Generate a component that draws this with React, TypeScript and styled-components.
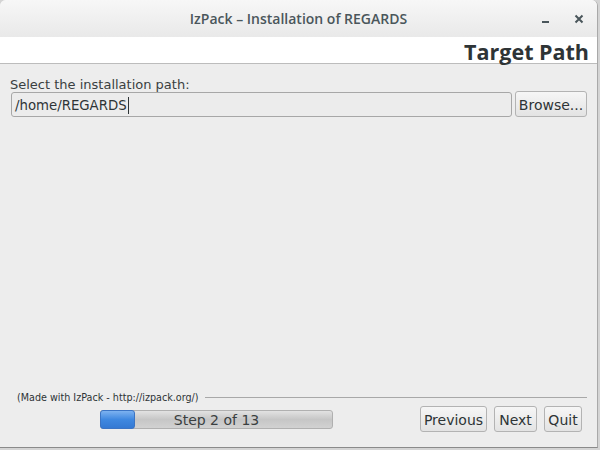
import React from "react";
import styled, { createGlobalStyle } from "styled-components";

const Global = createGlobalStyle`
  html, body { margin: 0; padding: 0; background: #d9d9d9; }
  body { width: 600px; height: 450px; overflow: hidden; }
`;

const Screen = styled.div`
  width: 600px;
  height: 450px;
  background: #d4d4d4;
  display: flex;
  align-items: flex-start;
`;

const Window = styled.div`
  width: 597px;
  height: 447px;
  display: flex;
  flex-direction: column;
  background: #ededed;
  border-right: 1px solid #a9a9a9;
  border-bottom: 1px solid #8a8a8a;
  border-radius: 6px 6px 0 0;
  overflow: hidden;
  font-family: "DejaVu Sans", sans-serif;
  color: #2e3436;
`;

const TitleBar = styled.div`
  height: 37px;
  flex: none;
  display: grid;
  grid-template-columns: 1fr auto 1fr;
  align-items: center;
  background: linear-gradient(#f7f7f7, #e9e9e9);
`;

const Title = styled.div`
  grid-column: 2;
  font-family: "Open Sans", sans-serif;
  font-weight: 600;
  font-size: 14px;
  color: #4a565b;
  padding-bottom: 1px;
`;

const Controls = styled.div`
  grid-column: 3;
  justify-self: end;
  display: flex;
  align-items: center;
  gap: 23px;
  padding-right: 13px;
`;

const CtlIcon = styled.svg`
  display: block;
  width: 10px;
  height: 10px;
`;

const Header = styled.div`
  height: 26px;
  flex: none;
  background: #ffffff;
  border-bottom: 1px solid #bcbcbc;
  display: flex;
  justify-content: flex-end;
  align-items: flex-end;
  padding-right: 8px;
`;

const HeaderTitle = styled.div`
  font-family: "Open Sans", sans-serif;
  font-weight: 700;
  font-size: 21.5px;
  line-height: 22px;
  color: #2e3436;
`;

const Content = styled.div`
  padding: 13px 10px 0 10px;
  display: flex;
  flex-direction: column;
`;

const Label = styled.div`
  font-size: 13px;
  line-height: 15px;
  color: #3a3f41;
`;

const FieldRow = styled.div`
  display: flex;
  gap: 3px;
  margin-top: -1px;
  align-items: flex-end;
`;

const PathField = styled.div`
  flex: 1;
  height: 25px;
  box-sizing: border-box;
  border: 1px solid #a7a7a7;
  border-radius: 3px;
  background: #ececec;
  display: flex;
  align-items: center;
  padding: 1px 0 0 3px;
  font-size: 13.3px;
  color: #2e3436;
  margin-left: 1px;
`;

const Caret = styled.span`
  display: inline-block;
  width: 1px;
  height: 17px;
  background: #2e3436;
  margin-left: 1px;
`;

const Button = styled.div<{ $w: number }>`
  width: ${(p) => p.$w}px;
  height: 26px;
  box-sizing: border-box;
  border: 1px solid #b3b3b3;
  border-radius: 3px;
  background: linear-gradient(#f6f6f6, #e3e3e3);
  display: flex;
  align-items: center;
  justify-content: center;
  padding-top: 2px;
  font-size: 14px;
  color: #2e3436;
  flex: none;
`;

const Spacer = styled.div`
  flex: 1;
`;

const Footer = styled.div`
  padding: 0 10px 15px 17px;
  display: flex;
  flex-direction: column;
`;

const Credit = styled.div`
  display: flex;
  align-items: center;
  gap: 6px;
  font-size: 9.6px;
  color: #2e3436;
  height: 12px;
`;

const Rule = styled.div`
  flex: 1;
  height: 1px;
  background: #a8a8a8;
`;

const BottomRow = styled.div`
  display: flex;
  align-items: center;
  margin-top: 3px;
  padding-left: 83px;
`;

const Progress = styled.div`
  width: 233px;
  height: 19px;
  box-sizing: border-box;
  border: 1px solid #b0b0b0;
  border-radius: 3px;
  background: linear-gradient(#e2e2e2, #c6c6c6 50%, #d2d2d2);
  position: relative;
  display: flex;
  align-items: center;
  justify-content: center;
  padding-top: 2px;
  font-size: 14px;
  color: #3a3f41;
`;

const Fill = styled.div`
  position: absolute;
  left: -1px;
  top: -1px;
  bottom: -1px;
  box-sizing: border-box;
  border: 1px solid #3b74c4;
  border-radius: 3px;
  background: linear-gradient(#7db2f0, #3f88e0 50%, #3479d3);
`;

const StepText = styled.span`
  position: relative;
`;

const Buttons = styled.div`
  margin-left: auto;
  display: flex;
  gap: 7px;
  padding-right: 5px;
`;

export default function App() {
  const steps = 13;
  const step = 2;
  const fillWidth = Math.round((233 * step) / steps) - 1;
  return (
    <>
      <Global />
      <Screen>
        <Window>
          <TitleBar>
            <Title>IzPack – Installation of REGARDS</Title>
            <Controls>
              <CtlIcon viewBox="0 0 10 10">
                <rect x="1" y="7" width="7" height="2" fill="#4a565b" />
              </CtlIcon>
              <CtlIcon viewBox="0 0 10 10">
                <path d="M1.5 1.5 L8.5 8.5 M8.5 1.5 L1.5 8.5" stroke="#4a565b" strokeWidth="2" />
              </CtlIcon>
            </Controls>
          </TitleBar>
          <Header>
            <HeaderTitle>Target Path</HeaderTitle>
          </Header>
          <Content>
            <Label>Select the installation path:</Label>
            <FieldRow>
              <PathField>
                /home/REGARDS
                <Caret />
              </PathField>
              <Button $w={72}>Browse...</Button>
            </FieldRow>
          </Content>
          <Spacer />
          <Footer>
            <Credit>
              <span>(Made with IzPack - http://izpack.org/)</span>
              <Rule />
            </Credit>
            <BottomRow>
              <Progress>
                <Fill style={{ width: `${fillWidth}px` }} />
                <StepText>Step 2 of 13</StepText>
              </Progress>
              <Buttons>
                <Button $w={67}>Previous</Button>
                <Button $w={43}>Next</Button>
                <Button $w={38}>Quit</Button>
              </Buttons>
            </BottomRow>
          </Footer>
        </Window>
      </Screen>
    </>
  );
}
